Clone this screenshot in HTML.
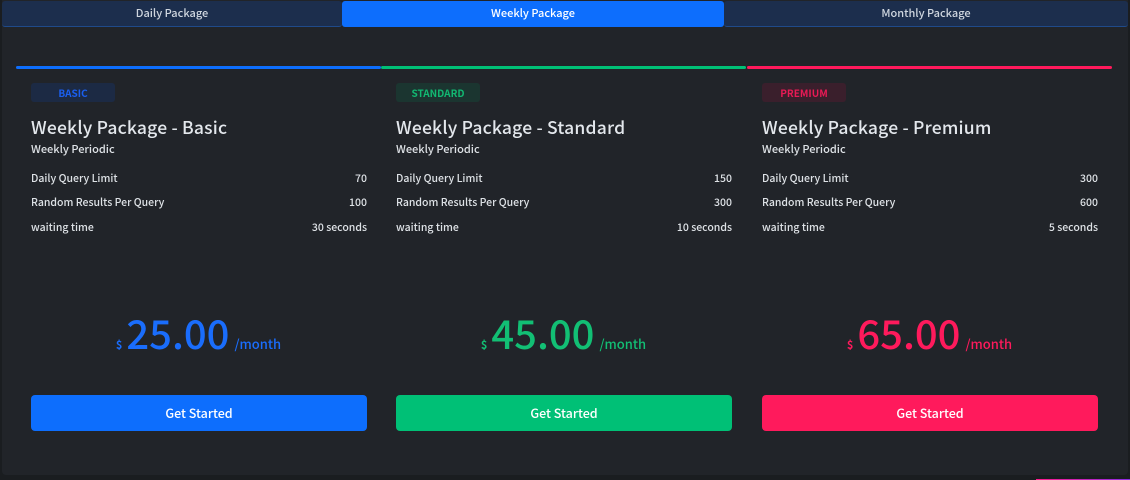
<!DOCTYPE html>
<html><head><meta charset="utf-8"><style>
*{box-sizing:border-box;margin:0;padding:0}
body{width:1130px;height:480px;background:#1a1d20;font-family:"Noto Sans CJK JP","Liberation Sans",sans-serif;color:#dee2e6;position:relative;overflow:hidden}
.panel{position:absolute;left:2px;top:0;width:1126px;height:475px;background:#212429;border-radius:0 0 4px 4px}
.tab{position:absolute;top:1px;height:26px;background:#1c2e4d;border-bottom:1px solid #1f4a8a;font-size:11px;text-align:center;line-height:24px;color:#cfd6df;border-radius:3px;font-weight:500}
.tab.act{background:#0d6efd;color:#fff;border-bottom-color:#0d6efd}
.card{position:absolute;top:66px;width:365px;height:380px}
.bar{position:absolute;left:0;right:0;top:0;height:3px;border-radius:2px}
.badge{position:absolute;left:15px;top:17px;height:19px;border-radius:3px;font-size:10px;font-weight:bold;line-height:19px;text-align:center}
.title{position:absolute;left:15px;top:49px;font-size:17.5px;font-weight:500;color:#e3e7ec;white-space:nowrap;letter-spacing:0.2px}
.sub{position:absolute;left:15px;top:75px;font-size:11px;font-weight:500}
.row{position:absolute;left:15px;width:336px;font-size:10.5px;font-weight:500;display:flex;justify-content:space-between}
.price{position:absolute;left:0;width:365px;top:237px;text-align:center;white-space:nowrap}
.price .d{font-size:11px;font-weight:bold}
.price .n{font-size:40px;font-weight:500;margin:0 5px 0 4px}
.price .m{font-size:13px;font-weight:500}
.btn{position:absolute;left:15px;top:329px;width:336px;height:36px;border-radius:4px;color:#fff;font-size:12.5px;font-weight:500;text-align:center;line-height:36px}
</style></head><body>
<div class="panel"></div>
<div class="tab" style="left:2px;width:340px">Daily Package</div>
<div class="tab act" style="left:342px;width:382px">Weekly Package</div>
<div class="tab" style="left:724px;width:404px">Monthly Package</div>

<div class="card" style="left:16px">
<div class="bar" style="background:#0d6efd"></div>
<div class="badge" style="width:84px;background:#1c2a44;color:#1a5ff0">BASIC</div>
<div class="title">Weekly Package - Basic</div>
<div class="sub">Weekly Periodic</div>
<div class="row" style="top:105px"><span>Daily Query Limit</span><span>70</span></div>
<div class="row" style="top:129px"><span>Random Results Per Query</span><span>100</span></div>
<div class="row" style="top:154px"><span>waiting time</span><span>30 seconds</span></div>
<div class="price" style="color:#1a6dfc"><span class="d">$</span><span class="n">25.00</span><span class="m">/month</span></div>
<div class="btn" style="background:#0d6efd">Get Started</div>
</div>

<div class="card" style="left:381px">
<div class="bar" style="background:#00c076"></div>
<div class="badge" style="width:84px;background:#1b3530;color:#12b872">STANDARD</div>
<div class="title">Weekly Package - Standard</div>
<div class="sub">Weekly Periodic</div>
<div class="row" style="top:105px"><span>Daily Query Limit</span><span>150</span></div>
<div class="row" style="top:129px"><span>Random Results Per Query</span><span>300</span></div>
<div class="row" style="top:154px"><span>waiting time</span><span>10 seconds</span></div>
<div class="price" style="color:#12bf74"><span class="d">$</span><span class="n">45.00</span><span class="m">/month</span></div>
<div class="btn" style="background:#00c076">Get Started</div>
</div>

<div class="card" style="left:747px">
<div class="bar" style="background:#ff1a5c"></div>
<div class="badge" style="width:84px;background:#3a1f2c;color:#e81a55">PREMIUM</div>
<div class="title">Weekly Package - Premium</div>
<div class="sub">Weekly Periodic</div>
<div class="row" style="top:105px"><span>Daily Query Limit</span><span>300</span></div>
<div class="row" style="top:129px"><span>Random Results Per Query</span><span>600</span></div>
<div class="row" style="top:154px"><span>waiting time</span><span>5 seconds</span></div>
<div class="price" style="color:#ff1a5c"><span class="d">$</span><span class="n">65.00</span><span class="m">/month</span></div>
<div class="btn" style="background:#ff1a5c">Get Started</div>
</div>
<div style="position:absolute;left:1036px;top:479px;width:94px;height:1px;background:linear-gradient(90deg,#ff1a8c,#8a2be2)"></div>
</body></html>
